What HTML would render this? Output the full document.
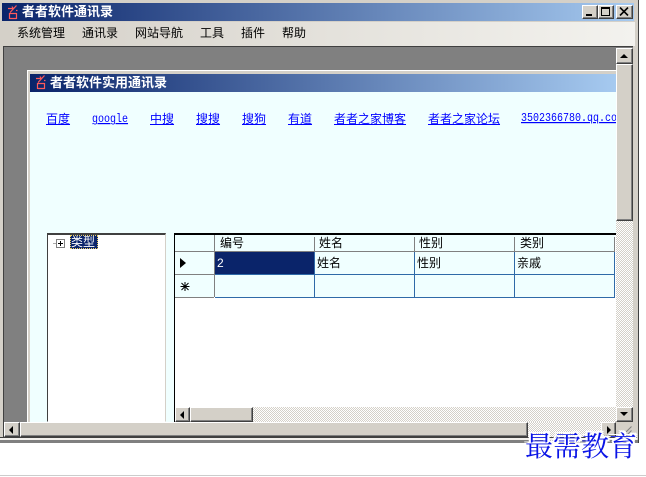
<!DOCTYPE html>
<html><head><meta charset="utf-8">
<style>
html,body{margin:0;padding:0;background:#fff;width:646px;height:477px;overflow:hidden}
body{position:relative;font:12px "WenQuanYi Zen Hei","Liberation Sans","Noto Sans CJK SC",sans-serif;color:#000;-webkit-font-smoothing:none;font-smooth:never}
div,a,svg{position:absolute;white-space:nowrap}
.t{line-height:14px;height:14px}
.tb{font-weight:bold;color:#fff;font-size:13px;line-height:16px}
a{color:#00f;text-decoration:underline;line-height:14px;top:112px}
.m{font-family:"Liberation Mono",monospace;font-size:10px;transform:scaleY(1.2);transform-origin:0 100%}
.b{background:#d4d0c8;box-sizing:border-box;border:1px solid;border-color:#fff #404040 #404040 #fff;box-shadow:inset -1px -1px 0 #808080}
.ck{background:repeating-conic-gradient(#d4d0c8 0 25%,#fff 0 50%) 0 0/2px 2px}
.tri{width:0;height:0;border-style:solid;border-color:transparent}
.steel{background:#2f6aa8}
.gr{background:#808080}
</style></head><body>
<!-- outer window -->
<div style="left:0;top:0;width:638px;height:443px;background:#d4d0c8;border-right:1px solid #404040"></div>
<div style="left:0;top:440px;width:638px;height:3px;background:#808080"></div>
<div style="left:0;top:438px;width:637px;height:2px;background:#f2f0ec"></div>
<div style="left:0;top:437px;width:637px;height:1px;background:#404040"></div>
<div style="left:2px;top:3px;width:632px;height:18px;background:linear-gradient(90deg,#0a246a,#a6caf0)"></div>
<svg style="left:7px;top:5px" width="11" height="15" viewBox="0 0 11 15"><path d="M9.5 .5L3 7.5M1 3.5H6M9 5.5H10.5M5 1.5L6.5 4M2.5 8V14M9.5 8V14M2.5 8.5H9.5M2.5 13.5H9.5" stroke="#ff5a5a" stroke-width="1.2" fill="none"/></svg>
<div class="tb" style="left:22px;top:4px">者者软件通讯录</div>
<div class="b" style="left:582px;top:5px;width:16px;height:14px"></div>
<div style="left:586px;top:14px;width:6px;height:2px;background:#000"></div>
<div class="b" style="left:598px;top:5px;width:16px;height:14px"></div>
<div style="left:601px;top:7px;box-sizing:border-box;width:9px;height:9px;border:1px solid #000;border-top-width:2px"></div>
<div class="b" style="left:616px;top:5px;width:17px;height:14px"></div>
<svg style="left:619px;top:7px" width="10" height="9" viewBox="0 0 10 9"><path d="M1 .5L9 8.5M9 .5L1 8.5" stroke="#000" stroke-width="1.6"/></svg>
<!-- menu -->
<div style="left:3px;top:22px;width:632px;height:24px;background:linear-gradient(90deg,#d4d0c8,#f3f2ee)"></div>
<div class="t" style="left:17px;top:26px">系统管理</div>
<div class="t" style="left:82px;top:26px">通讯录</div>
<div class="t" style="left:135px;top:26px">网站导航</div>
<div class="t" style="left:200px;top:26px">工具</div>
<div class="t" style="left:241px;top:26px">插件</div>
<div class="t" style="left:282px;top:26px">帮助</div>
<!-- MDI client -->
<div style="left:3px;top:46px;width:630px;height:391px;background:#808080;box-sizing:border-box;border:1px solid #404040;border-bottom:0;border-right:0"></div>
<!-- inner window -->
<div style="left:27px;top:70px;width:589px;height:352px;background:#d4d0c8;border-top:1px solid #fff;border-left:1px solid #fff;box-sizing:border-box"></div>
<div style="left:30px;top:74px;width:586px;height:18px;background:linear-gradient(90deg,#0a246a,#a6caf0)"></div>
<svg style="left:35px;top:75px" width="11" height="15" viewBox="0 0 11 15"><path d="M9.5 .5L3 7.5M1 3.5H6M9 5.5H10.5M5 1.5L6.5 4M2.5 8V14M9.5 8V14M2.5 8.5H9.5M2.5 13.5H9.5" stroke="#ff5a5a" stroke-width="1.2" fill="none"/></svg>
<div class="tb" style="left:50px;top:75px">者者软件实用通讯录</div>
<div style="left:30px;top:92px;width:586px;height:330px;background:#f0ffff"></div>
<a style="left:46px">百度</a>
<a class="m" style="left:92px;top:115px">google</a>
<a style="left:150px">中搜</a>
<a style="left:196px">搜搜</a>
<a style="left:242px">搜狗</a>
<a style="left:288px">有道</a>
<a style="left:334px">者者之家博客</a>
<a style="left:428px">者者之家论坛</a>
<div style="left:521px;top:108px;width:95px;height:20px;overflow:hidden"><a class="m" style="left:0;top:6px">3502366780.qq.com</a></div>
<!-- tree -->
<div style="left:47px;top:233px;width:119px;height:189px;background:#fff;box-sizing:border-box;border:1px solid;border-color:#404040 #d4d0c8 #fff #404040;border-top-width:2px"></div>
<div style="left:53px;top:243px;width:4px;height:1px;background:#aaa"></div>
<div style="left:56px;top:239px;width:9px;height:9px;box-sizing:border-box;border:1px solid #808080;background:#fff"></div>
<div style="left:58px;top:243px;width:5px;height:1px;background:#000"></div>
<div style="left:60px;top:241px;width:1px;height:5px;background:#000"></div>
<div style="left:70px;top:235px;width:28px;height:14px;box-sizing:border-box;background:#0a246a;outline:1px dotted #f0d060;outline-offset:-1px"></div>
<div class="t" style="left:71px;top:235px;color:#fff">类型</div>
<!-- grid -->
<div style="left:174px;top:233px;width:442px;height:189px;background:#fff;border-left:1px solid #000;box-sizing:border-box"></div>
<div style="left:174px;top:233px;width:442px;height:2px;background:#000"></div>
<div style="left:175px;top:235px;width:440px;height:62px;background:#f0ffff"></div>
<div class="gr" style="left:175px;top:251px;width:440px;height:1px"></div>
<div class="gr" style="left:214px;top:235px;width:1px;height:62px"></div>
<div class="gr" style="left:314px;top:237px;width:1px;height:14px"></div>
<div class="gr" style="left:414px;top:237px;width:1px;height:14px"></div>
<div class="gr" style="left:514px;top:237px;width:1px;height:14px"></div>
<div class="gr" style="left:614px;top:237px;width:1px;height:14px"></div>
<div class="t" style="left:220px;top:236px">编号</div>
<div class="t" style="left:319px;top:236px">姓名</div>
<div class="t" style="left:419px;top:236px">性别</div>
<div class="t" style="left:520px;top:236px">类别</div>
<div style="left:215px;top:252px;width:99px;height:22px;background:#0a246a"></div>
<div class="gr" style="left:175px;top:274px;width:39px;height:1px"></div>
<div class="gr" style="left:175px;top:297px;width:39px;height:1px"></div>
<div class="steel" style="left:215px;top:274px;width:400px;height:1px"></div>
<div class="steel" style="left:215px;top:297px;width:400px;height:1px"></div>
<div class="steel" style="left:314px;top:252px;width:1px;height:45px"></div>
<div class="steel" style="left:414px;top:252px;width:1px;height:45px"></div>
<div class="steel" style="left:514px;top:252px;width:1px;height:45px"></div>
<div class="steel" style="left:614px;top:252px;width:1px;height:45px"></div>
<div class="tri" style="left:180px;top:258px;border-width:5px 0 5px 6px;border-left-color:#000"></div>
<svg style="left:180px;top:282px" width="10" height="10" viewBox="0 0 10 10"><path d="M5 0V9M.5 4.5H9.5M1.5 1L8.5 8M8.5 1L1.5 8" stroke="#000" stroke-width="1"/></svg>
<div class="t" style="left:217px;top:256px;color:#fff;font-family:'Liberation Sans',sans-serif">2</div>
<div class="t" style="left:317px;top:256px">姓名</div>
<div class="t" style="left:417px;top:256px">性别</div>
<div class="t" style="left:517px;top:256px">亲戚</div>
<!-- grid hscroll -->
<div class="ck" style="left:190px;top:407px;width:426px;height:15px"></div>
<div class="b" style="left:175px;top:407px;width:15px;height:15px"></div>
<div class="tri" style="left:180px;top:411px;border-width:4px 4px 4px 0;border-right-color:#000"></div>
<div class="b" style="left:190px;top:407px;width:63px;height:15px"></div>
<!-- outer vscroll -->
<div class="ck" style="left:616px;top:48px;width:17px;height:374px"></div>
<div class="b" style="left:616px;top:48px;width:17px;height:16px"></div>
<div class="tri" style="left:620px;top:54px;border-width:0 4px 4px 4px;border-bottom-color:#000"></div>
<div class="b" style="left:616px;top:64px;width:17px;height:157px"></div>
<div class="b" style="left:616px;top:407px;width:17px;height:15px"></div>
<div class="tri" style="left:620px;top:412px;border-width:4px 4px 0 4px;border-top-color:#000"></div>
<!-- outer hscroll -->
<div class="ck" style="left:4px;top:422px;width:612px;height:15px"></div>
<div class="b" style="left:4px;top:422px;width:16px;height:15px"></div>
<div class="tri" style="left:9px;top:426px;border-width:4px 4px 4px 0;border-right-color:#000"></div>
<div class="b" style="left:20px;top:422px;width:508px;height:15px"></div>
<div class="b" style="left:601px;top:422px;width:15px;height:15px"></div>
<div class="tri" style="left:607px;top:426px;border-width:4px 0 4px 4px;border-left-color:#000"></div>
<div style="left:616px;top:422px;width:17px;height:15px;background:#d4d0c8"></div>
<svg style="left:622px;top:426px" width="10" height="10" viewBox="0 0 10 10"><path d="M9.5 .5L.5 9.5M9.5 4.5L4.5 9.5" stroke="#808080" stroke-width="1"/></svg>
<!-- watermark -->
<div style="left:525px;top:429px;font:28px/32px 'Noto Serif CJK SC','Noto Serif CJK TC',serif;color:#0a14e6;text-shadow:-2px 0 #fff,2px 0 #fff,0 -2px #fff,0 2px #fff,-2px -2px #fff,2px 2px #fff,-2px 2px #fff,2px -2px #fff">最需教育</div>
<div style="left:0;top:475px;width:646px;height:1px;background:#ccc"></div>
</body></html>
